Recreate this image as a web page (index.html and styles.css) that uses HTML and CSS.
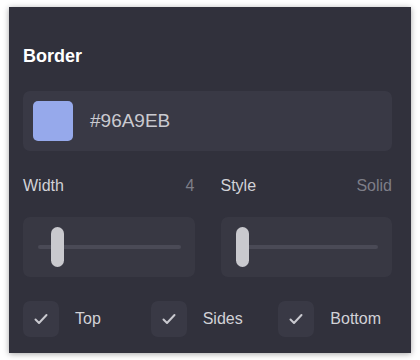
FILE: index.html
```html
<html>
<head>
<title>Border</title>
<meta name="viewport" content="width=device-width,initial-scale=1">
<link rel="stylesheet" href="styles.css">
</head>
<body>
  <div class="panel">
    <div class="title">Border</div>
    <div class="color-field">
      <div class="swatch"></div>
      <span class="hex">#96A9EB</span>
    </div>
    <div class="sliders">
      <div class="slider-group">
        <div class="slider-label"><span>Width</span><span class="value">4</span></div>
        <div class="slider-box">
          <div class="track"><div class="thumb thumb-width"></div></div>
        </div>
      </div>
      <div class="slider-group">
        <div class="slider-label"><span>Style</span><span class="value">Solid</span></div>
        <div class="slider-box">
          <div class="track"><div class="thumb thumb-style"></div></div>
        </div>
      </div>
    </div>
    <div class="checks">
      <label class="check">
        <span class="box"><svg width="18" height="18" viewBox="0 0 18 18"><path d="M3.5 9.5l3.5 3.5 7.5-8" fill="none" stroke="#c9c9cf" stroke-width="2" stroke-linecap="round" stroke-linejoin="round"/></svg></span>
        <span>Top</span>
      </label>
      <label class="check">
        <span class="box"><svg width="18" height="18" viewBox="0 0 18 18"><path d="M3.5 9.5l3.5 3.5 7.5-8" fill="none" stroke="#c9c9cf" stroke-width="2" stroke-linecap="round" stroke-linejoin="round"/></svg></span>
        <span>Sides</span>
      </label>
      <label class="check">
        <span class="box"><svg width="18" height="18" viewBox="0 0 18 18"><path d="M3.5 9.5l3.5 3.5 7.5-8" fill="none" stroke="#c9c9cf" stroke-width="2" stroke-linecap="round" stroke-linejoin="round"/></svg></span>
        <span>Bottom</span>
      </label>
    </div>
  </div>
</body>
</html>
```

FILE: styles.css
```css
html,body { margin: 0; padding: 0; background: #fff; font-family: "Liberation Sans", Arial, sans-serif; }
body { padding: 7px 9px; }
.panel { width: 402px; height: 346px; box-sizing: border-box; padding: 38px 19px 0 14px; background: #31313c; box-shadow: 0 1px 6px rgba(0,0,0,0.35); color: #d2d2d7; }
.title { font-size: 18px; font-weight: bold; color: #fff; line-height: 22px; }
.color-field { display: flex; align-items: center; margin-top: 24px; padding: 10px; background: #393945; border-radius: 7px; }
.swatch { width: 40px; height: 40px; border-radius: 5px; background: #96a9eb; }
.hex { margin-left: 17px; font-size: 19px; color: #cacad0; }
.sliders { display: flex; gap: 26px; margin-top: 25px; }
.slider-group { flex: 1; }
.slider-label { display: flex; justify-content: space-between; font-size: 16px; line-height: 20px; }
.slider-label .value { color: #7e7e88; }
.slider-box { margin-top: 21px; height: 60px; display: flex; align-items: center; padding: 0 14px 0 15px; background: #383843; border-radius: 7px; }
.track { flex: 1; height: 4px; border-radius: 2px; background: #4a4a56; position: relative; }
.thumb { position: absolute; top: -18px; width: 13px; height: 40px; border-radius: 7px; background: #c9c9ce; }
.thumb-width { left: 13px; }
.thumb-style { left: 0; }
.checks { display: grid; grid-template-columns: 1fr 1fr 1fr; gap: 14px; margin-top: 24px; }
.check { display: flex; align-items: center; gap: 16px; font-size: 16px; color: #d2d2d7; }
.box { width: 36px; height: 36px; border-radius: 7px; background: #393945; display: flex; align-items: center; justify-content: center; }
```
